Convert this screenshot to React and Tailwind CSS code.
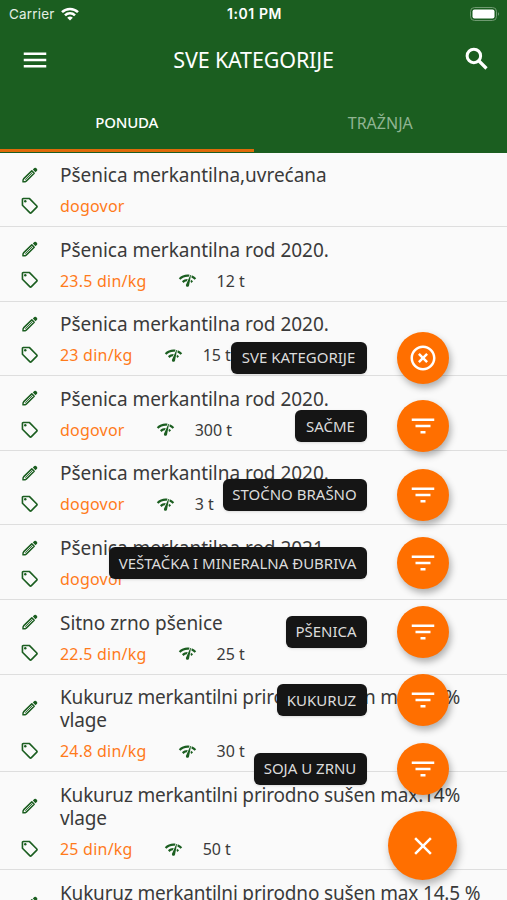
import React from 'react';
import {
  MdMenu,
  MdFilterList,
  MdHighlightOff,
  MdClose,
  MdNetworkCheck,
  MdOutlineLocalOffer,
} from 'react-icons/md';

const OFFERS = [
  { title: ['Pšenica merkantilna,uvrećana'], price: 'dogovor' },
  { title: ['Pšenica merkantilna rod 2020.'], price: '23.5 din/kg', amount: '12 t' },
  { title: ['Pšenica merkantilna rod 2020.'], price: '23 din/kg', amount: '15 t' },
  { title: ['Pšenica merkantilna rod 2020.'], price: 'dogovor', amount: '300 t' },
  { title: ['Pšenica merkantilna rod 2020.'], price: 'dogovor', amount: '3 t' },
  { title: ['Pšenica merkantilna rod 2021.'], price: 'dogovor' },
  { title: ['Sitno zrno pšenice'], price: '22.5 din/kg', amount: '25 t' },
  { title: ['Kukuruz merkantilni prirodno sušen max.14%', 'vlage'], price: '24.8 din/kg', amount: '30 t' },
  { title: ['Kukuruz merkantilni prirodno sušen max.14%', 'vlage'], price: '25 din/kg', amount: '50 t' },
  { title: ['Kukuruz merkantilni prirodno sušen max 14.5 %', 'vlage'], price: 'dogovor' },
];

const CATEGORIES = [
  { label: 'SVE KATEGORIJE', width: 'w-[136px]', icon: MdHighlightOff },
  { label: 'SAČME', width: 'w-[72px]', icon: MdFilterList },
  { label: 'STOČNO BRAŠNO', width: 'w-[144px]', icon: MdFilterList },
  { label: 'VEŠTAČKA I MINERALNA ĐUBRIVA', width: 'w-[258px]', icon: MdFilterList },
  { label: 'PŠENICA', width: 'w-[81px]', icon: MdFilterList },
  { label: 'KUKURUZ', width: 'w-[90px]', icon: MdFilterList },
  { label: 'SOJA U ZRNU', width: 'w-[113px]', icon: MdFilterList },
];

const PencilIcon = () => (
  <svg viewBox="0 0 18 18" className="-mt-[2px] h-[18px] w-[18px]" fill="none">
    <path
      d="M2 15.8q-.3-2.1.8-3.2l8-7.7 2.4 2.4-8 7.8q-1.2.9-3.2.7z"
      stroke="currentColor"
      strokeWidth="1.5"
      strokeLinejoin="round"
    />
    <path d="M4.2 13.7l7-6.8" stroke="currentColor" strokeWidth="0.9" />
    <path d="M11.8 3.5l1.5-1.4q.9-.8 1.8 0l.9.9q.8.9 0 1.8l-1.5 1.4z" fill="currentColor" />
  </svg>
);

const SearchIcon = () => (
  <svg viewBox="0 0 24 24" className="mb-[3px] h-[30px] w-[30px]" fill="none" stroke="currentColor">
    <circle cx="9.5" cy="9.5" r="5.4" strokeWidth="2.4" />
    <path d="M13.6 13.6l6 6" strokeWidth="2.6" />
  </svg>
);

const StatusBar = () => (
  <div className="flex h-7 items-center justify-between pl-[9px] pr-[7px] font-['Inter',sans-serif] text-[13.5px] text-[#e4efe4]">
    <div className="flex flex-1 items-center gap-[6px]">
      <span className="tracking-[0.2px]">Carrier</span>
      <svg viewBox="0 0 18 14" className="mb-px h-[14px] w-[18px]" fill="none" stroke="#fff" strokeWidth="2.5">
        <path d="M1 5.2a11.3 11.3 0 0 1 16 0" />
        <path d="M4 8.4a7 7 0 0 1 10 0" />
        <path d="M9 13.6L6.2 10.8a4 4 0 0 1 5.6 0z" fill="#fff" stroke="none" />
      </svg>
    </div>
    <span className="text-sm font-semibold tracking-[0.55px] text-white">1:01 PM</span>
    <div className="flex flex-1 justify-end pb-px">
      <svg viewBox="0 0 30 14" className="h-[14px] w-[30px]">
        <rect x="0.5" y="0.5" width="26" height="13" rx="4" fill="none" stroke="#6f9a71" />
        <rect x="2.5" y="2.5" width="22" height="9" rx="2" fill="#fff" />
        <path d="M28 5q1.8 2 0 4z" fill="#8fb191" />
      </svg>
    </div>
  </div>
);

const Header = () => (
  <header className="h-[152.5px] bg-[#1b5e20]">
    <StatusBar />
    <div className="flex h-16 items-center justify-between pl-5 pr-[15px] text-white">
      <MdMenu size={30} />
      <h1 className="whitespace-nowrap pr-[5px] text-[21.5px] tracking-[-0.15px]">SVE KATEGORIJE</h1>
      <SearchIcon />
    </div>
    <div className="flex h-[60px] text-[16px]">
      <div className="flex flex-1 items-center justify-center border-b-[3px] border-[#e06a0a] pt-[4px] text-[15px] font-medium tracking-[-0.2px] text-white">
        PONUDA
      </div>
      <div className="flex flex-1 items-center justify-center pt-px text-[#90b492]">TRAŽNJA</div>
    </div>
  </header>
);

const OfferRow = ({ title, price, amount }) => {
  const tracking = title[0].length > 35 ? 'tracking-[-0.18px]' : 'tracking-[-0.03px]';
  return (
    <li className="border-b border-[#dedede] pb-[10px] pl-[21px] pt-[11.6px]">
      <div className="flex items-center">
        <div className="w-[39px] shrink-0 text-[#1b5e20]">
          <PencilIcon />
        </div>
        <div className={`text-[19px] leading-[23.2px] text-[#3a3a3a] ${tracking}`}>
          {title.map((line) => (
            <p key={line} className="whitespace-nowrap">{line}</p>
          ))}
        </div>
      </div>
      <div className="mt-[8.8px] flex h-5 items-center text-[16px]">
        <div className="w-[39px] shrink-0 text-[#1b5e20]">
          <MdOutlineLocalOffer size={19.5} className="-ml-px -mt-px" />
        </div>
        <span className="tracking-[0.22px] text-[#ff7a1a]">{price}</span>
        {amount && (
          <>
            <MdNetworkCheck size={19} className="ml-[31px] text-[#1b5e20]" />
            <span className="ml-5 text-[#3a3a3a]">{amount}</span>
          </>
        )}
      </div>
    </li>
  );
};

const SpeedDial = () => (
  <div className="absolute right-[50px] top-[331.5px] flex flex-col items-end">
    {CATEGORIES.map(({ label, width, icon: Icon }) => (
      <div key={label} className="mb-[16.5px] flex items-center pr-[8.5px]">
        <span
          className={`mr-[30px] flex h-8 items-center justify-center whitespace-nowrap rounded-md bg-[#151515] text-[15px] text-[#dcdcdc] shadow ${width}`}
        >
          {label}
        </span>
        <button className="flex size-[52px] items-center justify-center rounded-full bg-[#ff6f00] text-white shadow-[2px_4px_7px_rgba(0,0,0,0.3)]">
          <Icon size={30} />
        </button>
      </div>
    ))}
    <button className="flex size-[69px] items-center justify-center rounded-full bg-[#ff6f00] text-white shadow-[2px_4px_8px_rgba(0,0,0,0.3)]">
      <MdClose size={30} />
    </button>
  </div>
);

const App = () => (
  <div className="relative h-[900px] w-[507px] overflow-hidden bg-[#fafafa] font-['Noto_Sans',sans-serif]">
    <Header />
    <ul>
      {OFFERS.map((offer, i) => (
        <OfferRow key={i} {...offer} />
      ))}
    </ul>
    <SpeedDial />
  </div>
);

export default App;
